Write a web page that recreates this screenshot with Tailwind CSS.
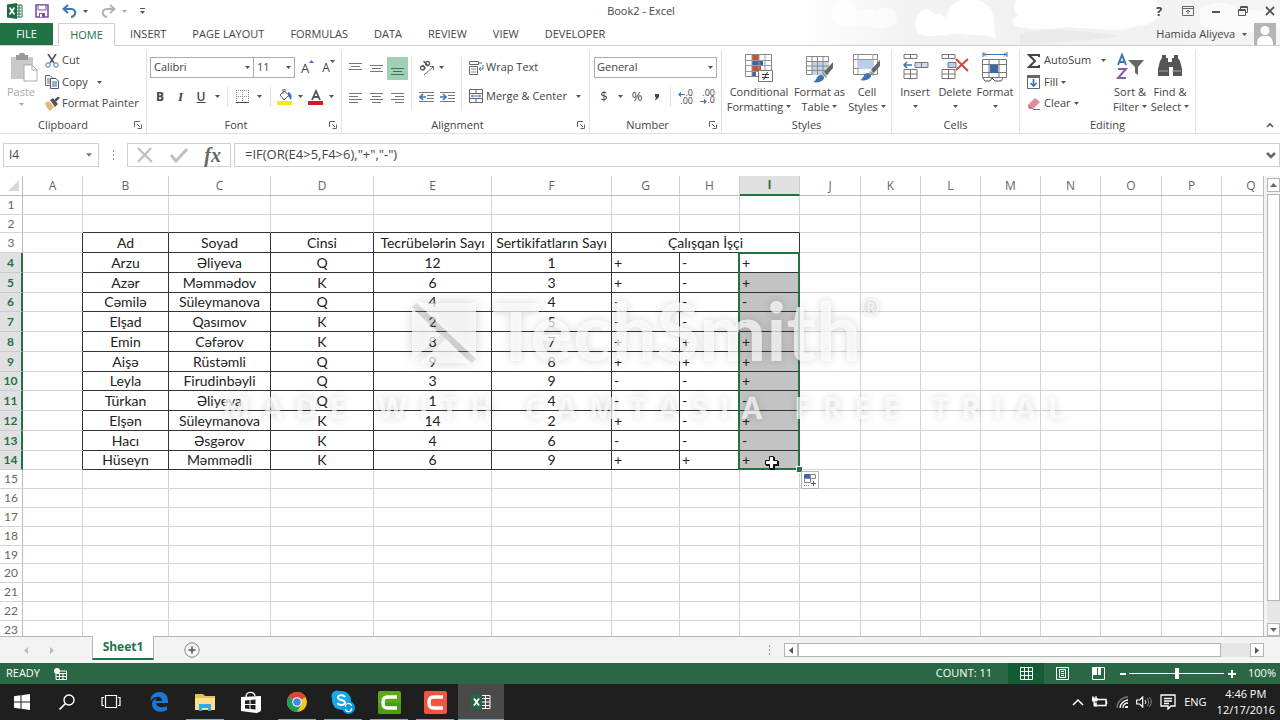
<!DOCTYPE html>
<html lang="en">
<head>
  <meta charset="UTF-8">
  <meta name="viewport" content="width=device-width, initial-scale=1.0">
  <script src="https://cdn.jsdelivr.net/npm/@tailwindcss/browser@4"></script>
  <title>Book2 - Excel</title>
</head>
<body class="h-screen flex flex-col overflow-hidden bg-white text-[#444] text-[11px] font-['Open_Sans','Noto_Sans',sans-serif]">

  <!-- shared icons -->
  <svg class="hidden">
    <symbol id="caret" viewBox="0 0 5 3"><path d="M0 0h5L2.5 3z" fill="#555"/></symbol>
    <symbol id="launcher" viewBox="0 0 8 8"><path d="M.5 6V.5H6M3 3l3 3M7.500 3.500v4h-4" fill="none" stroke="#666"/></symbol>
    <symbol id="brush" viewBox="0 0 22 22"><path d="M21 1v6l-6 7-3-3z" fill="#666"/><path d="M12 12l3 3-1 2-4-4z" fill="#999"/><path d="M1 21c4-1 3-7 8-7 3 0 4 3 2 5-2 2-6 3-10 2z" fill="#3c74b5"/></symbol>
    <symbol id="excel" viewBox="0 0 16 16"><path d="M8 2h7v12H8z" fill="#fff" stroke="#1e7145"/><path d="M9 5h5M9 8h5M9 11h5M12 2v12" stroke="#1e7145"/><path d="M0 1.500L10 0v16L0 14.500z" fill="#1e6b41"/><path d="M2.500 4.500l5 7M7.500 4.500l-5 7" stroke="#fff" stroke-width="1.600"/></symbol>
  </svg>

  <!-- title bar and tabs -->
  <header class="relative">
    <svg class="absolute right-0 top-0 w-[480px] h-[45px] opacity-80" viewBox="0 0 480 45" preserveAspectRatio="none">
      <defs>
        <linearGradient id="sky" x1="0" x2="1"><stop offset="0" stop-color="#fff"/><stop offset=".2" stop-color="#f1f1f1"/><stop offset=".5" stop-color="#eee"/><stop offset="1" stop-color="#f3f3f3"/></linearGradient>
      </defs>
      <path d="M0 0h480v45H0z" fill="url(#sky)"/>
      <g fill="#fff">
        <path d="M34 22c-6-10 0-22 12-22 8 0 10 8 12 12 6-5 14-4 18 0 6-6 18-6 20 2 4 12-10 16-20 14-12-2-34 2-42-6z" opacity=".7"/>
        <path d="M116 20c0-10 12-14 18-6 6-2 10 2 12 4C148 4 162-4 174 0c16 0 22 16 20 26l2 12c-12-4-24-2-34-4-14-2-40 8-46-4 0-4-2-6 0-10z"/>
        <path d="M216 0h140c12 10 2 26-20 26-14 8-40 2-60 2-20-2-30 4-50 0-14 0-18-8-8-12-4-4-6-10-2-16z" opacity=".9"/>
        <path d="M400 8c14-8 30-6 38 2 14-2 26 4 42 0v18c-30 8-70 4-80-4z" opacity=".7"/>
      </g>
      <path d="M220 34c30-8 70-2 100 2-30 6-80 6-100 9z" fill="#e6e6e6"/>
    </svg>
    <div class="relative flex items-center h-[22px]">
      <div class="flex-1 flex items-center pl-[7px]">
        <svg class="w-4 h-4" aria-label="Excel"><use href="#excel"/></svg>
        <button class="ml-3" aria-label="Save">
          <svg class="w-[14px] h-[14px]" viewBox="0 0 14 14"><path d="M1 1h12v12H1z" fill="none" stroke="#7a4fa3" stroke-width="1.600"/><path d="M3 1h8v5H3z" fill="#fff" stroke="#7a4fa3"/><path d="M4 9h6v4H4z" fill="#7a4fa3"/><path d="M5 10h2v3H5z" fill="#fff"/></svg>
        </button>
        <button class="ml-[13px] flex items-center gap-[6px]" aria-label="Undo">
          <svg class="w-[15px] h-[14px]" viewBox="0 0 15 14"><path d="M2 5h7c3 0 5 2 4 5-1 2-2 3-4 3" fill="none" stroke="#3c74b5" stroke-width="2"/><path d="M6 1L1.500 5 6 9" fill="none" stroke="#3c74b5" stroke-width="2"/></svg>
          <svg class="w-[5px] h-[3px]"><use href="#caret"/></svg>
        </button>
        <button class="ml-[13px] flex items-center gap-[6px] opacity-50" aria-label="Redo">
          <svg class="w-[15px] h-[14px]" viewBox="0 0 15 14"><path d="M13 5H6C3 5 1 7 2 10c1 2 2 3 4 3" fill="none" stroke="#666" stroke-width="2"/><path d="M9 1l4.500 4L9 9" fill="none" stroke="#666" stroke-width="2"/></svg>
          <svg class="w-[5px] h-[3px]"><use href="#caret"/></svg>
        </button>
        <button class="ml-[13px]" aria-label="Customize toolbar">
          <svg class="w-[5px] h-[6px]" viewBox="0 0 5 6"><path d="M0 .5h5" stroke="#555"/><path d="M0 3h5L2.500 6z" fill="#555"/></svg>
        </button>
      </div>
      <h1>Book2 - Excel</h1>
      <div class="flex-1 flex items-center justify-end gap-[17px] pr-[5px]">
        <button class="text-[13px] font-bold w-3 leading-none" aria-label="Help">?</button>
        <button aria-label="Ribbon options"><svg class="w-3 h-[10px]" viewBox="0 0 12 10"><path d="M.5.500h11v9H.5zM.5 2.500h11M6 8V4M4 6l2-2 2 2" fill="none" stroke="#666"/></svg></button>
        <button aria-label="Minimize"><svg class="w-[10px] h-[10px]" viewBox="0 0 10 10"><path d="M1 6h8" stroke="#555" stroke-width="2"/></svg></button>
        <button aria-label="Restore"><svg class="w-[10px] h-[10px]" viewBox="0 0 10 10"><path d="M.5 3.500h7v6h-7zM.5 4.500h7M2.500 3V.5h7v6H8M2.500 1.500h7" fill="none" stroke="#555"/></svg></button>
        <button aria-label="Close"><svg class="w-[10px] h-[10px]" viewBox="0 0 10 10"><path d="M1 1l8 8M9 1L1 9" stroke="#555" stroke-width="1.800"/></svg></button>
      </div>
    </div>
    <nav class="relative flex items-stretch h-6 pt-px border-b border-[#d0d0d0]">
      <button class="w-[53px] bg-[#217346] text-white">FILE</button>
      <button class="w-[57px] ml-[5px] -mb-px bg-white border border-b-0 border-[#d0d0d0] text-[#217346]">HOME</button>
      <button class="px-[13px] ml-[2px]">INSERT</button>
      <button class="px-[13px]">PAGE LAYOUT</button>
      <button class="px-[13px]">FORMULAS</button>
      <button class="px-[13px]">DATA</button>
      <button class="px-[13px]">REVIEW</button>
      <button class="px-[13px]">VIEW</button>
      <button class="px-[13px]">DEVELOPER</button>
      <button class="ml-auto flex items-center gap-[7px] pr-1">
        Hamida Aliyeva
        <svg class="w-[5px] h-[3px]"><use href="#caret"/></svg>
        <svg class="w-[22px] h-[22px]" viewBox="0 0 22 22"><path d="M0 0h22v22H0z" fill="#b5b5b5"/><circle cx="11" cy="7.500" r="4.500" fill="#fff"/><path d="M3 22c0-8 3-9 8-9s8 1 8 9z" fill="#fff"/></svg>
      </button>
    </nav>
  </header>

  <!-- ribbon -->
  <section class="flex h-[88px] pt-1 border-b border-[#e2e2e2] whitespace-nowrap">
    <div class="w-[147px] flex flex-col border-r border-[#e2e2e2]">
      <div class="flex h-[68px]">
        <button class="w-[42px] flex flex-col items-center text-[#aaa] leading-[15px] pt-[2px]">
          <svg class="w-7 h-8 ml-[5px]" viewBox="0 0 28 32"><path d="M1 5h22v22H1z" fill="#c9c9c9"/><path d="M6 3h3c0-3 6-3 6 0h3v5H6z" fill="#999"/><path d="M14 13h8l5 5v11H14z" fill="#fff" stroke="#aaa"/><path d="M22 13v5h5" fill="none" stroke="#aaa"/></svg>
          Paste
          <svg class="w-[5px] h-[3px] mt-1 opacity-50"><use href="#caret"/></svg>
        </button>
        <div class="flex flex-col items-start pl-[3px]">
          <button class="h-[21px] flex items-center gap-[3px]">
            <svg class="w-[14px] h-[14px]" viewBox="0 0 14 14"><path d="M3 0l6 9M11 0L5 9" stroke="#555" stroke-width="1.600"/><circle cx="3" cy="11" r="2.200" fill="none" stroke="#3c74b5"/><circle cx="11" cy="11" r="2.200" fill="none" stroke="#3c74b5"/></svg>
            Cut
          </button>
          <button class="h-[22px] flex items-center gap-[3px]">
            <svg class="w-[14px] h-[14px]" viewBox="0 0 14 14"><path d="M.5.500H5L7.500 3v7.500h-7zM2 4h3M2 6h3M2 8h3" fill="#fff" stroke="#666"/><path d="M5.500 3.500H11L13.500 6v7.500h-8z" fill="#fff" stroke="#3d5f85"/><path d="M7 7h5M7 9h5M7 11h5" stroke="#3d5f85"/></svg>
            Copy
            <svg class="w-[5px] h-[3px] ml-[6px]"><use href="#caret"/></svg>
          </button>
          <button class="h-[21px] flex items-center gap-[2px]">
            <svg class="w-[15px] h-[14px]" viewBox="0 0 15 14"><path d="M0 6l4-2 5 6-4 4c-3-2-4-5-5-8z" fill="#eab676"/><path d="M5 3l3-2 5 6-3 3z" fill="#555"/><path d="M10 4l4-4" stroke="#555" stroke-width="2.500"/></svg>
            Format Painter
          </button>
        </div>
      </div>
      <div class="flex items-center h-[14px] pr-1"><span class="flex-1 text-center pr-2">Clipboard</span><svg class="w-2 h-2"><use href="#launcher"/></svg></div>
    </div>

    <div class="w-[195px] flex flex-col border-r border-[#e2e2e2]">
      <div class="h-[68px] pt-[7px] pl-[3px] flex flex-col gap-2">
        <div class="flex h-[21px] items-center">
          <label class="relative w-[104px] h-[21px]"><select class="appearance-none w-full h-full border border-[#ababab] pl-[3px]" aria-label="Font"><option>Calibri</option></select><svg class="absolute right-1 top-[9px] w-[5px] h-[3px]"><use href="#caret"/></svg></label>
          <label class="relative w-[42px] -ml-px h-[21px]"><select class="appearance-none w-full h-full border border-[#ababab] pl-[3px]" aria-label="Font size"><option>11</option></select><svg class="absolute right-1 top-[9px] w-[5px] h-[3px]"><use href="#caret"/></svg></label>
          <button class="flex pl-[6px] text-[13px] leading-4" aria-label="Increase font size">A<svg class="w-[5px] h-[3px]" viewBox="0 0 5 3"><path d="M0 3h5L2.500 0z" fill="#3c74b5"/></svg></button>
          <button class="flex pl-2 text-[12px] leading-4" aria-label="Decrease font size">A<svg class="w-[5px] h-[3px]" viewBox="0 0 5 3"><path d="M0 0h5L2.500 3z" fill="#3d5f85"/></svg></button>
        </div>
        <div class="flex h-[21px] items-center text-[12px]">
          <button class="w-5 font-bold">B</button>
          <button class="w-[21px] italic font-['Liberation_Serif',serif] font-bold text-[13px]">I</button>
          <button class="w-5 underline font-semibold">U</button>
          <button class="w-3 flex justify-center" aria-label="Underline options"><svg class="w-[5px] h-[3px]"><use href="#caret"/></svg></button>
          <span class="w-px h-5 bg-[#e2e2e2] ml-1"></span>
          <button class="ml-2 flex items-center gap-2" aria-label="Borders"><svg class="w-[13px] h-[13px]" viewBox="0 0 13 13"><path d="M.5 0v12M12.500 0v12M6.500 0v12M0 .5h13M0 6.500h13" stroke="#888" stroke-dasharray="1 1"/><path d="M0 12.500h13" stroke="#444"/></svg><svg class="w-[5px] h-[3px]"><use href="#caret"/></svg></button>
          <span class="w-px h-5 bg-[#e2e2e2] ml-2"></span>
          <button class="ml-[6px] flex items-center gap-[5px]" aria-label="Fill color"><svg class="w-4 h-4" viewBox="0 0 16 16"><path d="M3 6l4-4 5 4-5 5z" fill="#fff" stroke="#666"/><path d="M6 5V0h2v3" fill="none" stroke="#666"/><path d="M11 3c4 1 4 5 3 8l-3-4z" fill="#3c74b5"/><path d="M0 12h15v4H0z" fill="#f7e81c"/></svg><svg class="w-[5px] h-[3px]"><use href="#caret"/></svg></button>
          <button class="ml-[5px] flex items-center gap-[5px]" aria-label="Font color"><svg class="w-4 h-4" viewBox="0 0 16 16"><path d="M4 11l4-9 4 9M5.500 8h5" fill="none" stroke="#555" stroke-width="1.800"/><path d="M0 12h15v4H0z" fill="#e0161c"/></svg><svg class="w-[5px] h-[3px]"><use href="#caret"/></svg></button>
        </div>
      </div>
      <div class="flex items-center h-[14px] pr-1"><span class="flex-1 text-center pr-1">Font</span><svg class="w-2 h-2"><use href="#launcher"/></svg></div>
    </div>

    <div class="w-[248px] flex flex-col border-r border-[#e2e2e2]">
      <div class="h-[68px] pt-[7px] pl-[3px] flex">
        <div class="grid grid-cols-3 gap-y-2 w-[63px] h-[50px]">
          <button class="flex items-center justify-center" aria-label="Top align"><svg class="w-[13px] h-[15px]" viewBox="0 0 13 15"><path d="M0 2.500h13M2 5.500h9M0 8.500h13" stroke="#777"/></svg></button>
          <button class="flex items-center justify-center" aria-label="Middle align"><svg class="w-[13px] h-[15px]" viewBox="0 0 13 15"><path d="M0 4.500h13M2 7.500h9M0 10.500h13" stroke="#777"/></svg></button>
          <button class="flex items-center justify-center bg-[#9fd0b6]" aria-label="Bottom align"><svg class="w-[13px] h-[15px]" viewBox="0 0 13 15"><path d="M0 7.500h13M2 10.500h9M0 13.500h13" stroke="#4d6b5a"/></svg></button>
          <button class="flex items-center justify-center" aria-label="Align left"><svg class="w-[13px] h-[11px]" viewBox="0 0 13 11"><path d="M0 1.500h13M0 4.500h9M0 7.500h13M0 10.500h9" stroke="#777"/></svg></button>
          <button class="flex items-center justify-center" aria-label="Center"><svg class="w-[13px] h-[11px]" viewBox="0 0 13 11"><path d="M0 1.500h13M2 4.500h9M0 7.500h13M2 10.500h9" stroke="#777"/></svg></button>
          <button class="flex items-center justify-center" aria-label="Align right"><svg class="w-[13px] h-[11px]" viewBox="0 0 13 11"><path d="M0 1.500h13M4 4.500h9M0 7.500h13M4 10.500h9" stroke="#777"/></svg></button>
        </div>
        <span class="w-px h-[52px] bg-[#e2e2e2] ml-[3px]"></span>
        <div class="flex flex-col gap-2 w-[49px] pl-[7px]">
          <button class="h-[21px] flex items-center gap-1" aria-label="Orientation"><svg class="w-4 h-4 overflow-visible" viewBox="0 0 16 16"><g fill="none" stroke="#555" stroke-width="1.300"><circle cx="3.500" cy="8" r="2"/><path d="M3.500 5l3 3.500M4.500 1l4.500 5"/><circle cx="8.500" cy="3.500" r="2"/></g><path d="M5 15l9-8M11 6.500h3.500V10" fill="none" stroke="#666"/></svg><svg class="w-[5px] h-[3px]"><use href="#caret"/></svg></button>
          <div class="h-[21px] flex items-center gap-[6px]">
            <button aria-label="Decrease indent"><svg class="w-[15px] h-[11px]" viewBox="0 0 15 11"><path d="M0 1.500h15M8 4.500h7M8 7.500h7M0 10.500h15" stroke="#777"/><path d="M1 6h6M4 3L1 6l3 3" fill="none" stroke="#3c74b5" stroke-width="1.600"/></svg></button>
            <button aria-label="Increase indent"><svg class="w-[15px] h-[11px]" viewBox="0 0 15 11"><path d="M0 1.500h15M8 4.500h7M8 7.500h7M0 10.500h15" stroke="#777"/><path d="M0 6h6M3 3l3 3-3 3" fill="none" stroke="#3c74b5" stroke-width="1.600"/></svg></button>
          </div>
        </div>
        <span class="w-px h-[52px] bg-[#e2e2e2]"></span>
        <div class="flex flex-col items-start gap-2 pl-[7px]">
          <button class="h-[21px] flex items-center gap-[2px]"><svg class="w-[15px] h-[15px]" viewBox="0 0 15 15"><path d="M.5 1.500h9v3h-9zM.5 6.500h8v8h-8z" fill="#fff" stroke="#666"/><path d="M2 9h5M2 12h5" stroke="#888"/><path d="M9 3h4M14 5v4h-4M12 7l-2 2 2 2" fill="none" stroke="#3c74b5"/></svg>Wrap Text</button>
          <button class="h-[21px] flex items-center gap-[2px]"><svg class="w-[15px] h-[15px]" viewBox="0 0 15 15"><path d="M.5.500h13v13H.5zM.5 4.500h13M.5 9.500h13M7 .5v4M7 9.500v4" fill="none" stroke="#666"/><path d="M2 7h10M4 5.500L2.500 7 4 8.500M10 5.500L11.500 7 10 8.500" fill="none" stroke="#3c74b5"/></svg>Merge &amp; Center<svg class="w-[5px] h-[3px] ml-[7px]"><use href="#caret"/></svg></button>
        </div>
      </div>
      <div class="flex items-center h-[14px] pr-1"><span class="flex-1 text-center pr-1">Alignment</span><svg class="w-2 h-2"><use href="#launcher"/></svg></div>
    </div>

    <div class="w-[132px] flex flex-col border-r border-[#e2e2e2]">
      <div class="h-[68px] pt-[7px] pl-1 flex flex-col gap-2">
        <label class="relative w-[123px] h-[21px]"><select class="appearance-none w-full h-full border border-[#ababab] pl-[2px]" aria-label="Number format"><option>General</option></select><svg class="absolute right-1 top-[9px] w-[5px] h-[3px]"><use href="#caret"/></svg></label>
        <div class="flex h-[21px] items-center text-[13px]">
          <button class="w-5">$</button>
          <button class="w-3 flex justify-center" aria-label="Currency options"><svg class="w-[5px] h-[3px]"><use href="#caret"/></svg></button>
          <button class="w-[22px]">%</button>
          <button class="w-[18px] flex justify-center" aria-label="Comma style"><svg class="w-1 h-[6px]" viewBox="0 0 4 6"><path d="M0 0h4v3L1 6H0l1-3H0z" fill="#444"/></svg></button>
          <span class="w-px h-5 bg-[#e2e2e2] ml-1"></span>
          <button class="ml-1 w-[18px] text-[9px] leading-[7px] text-right" aria-label="Increase decimal"><svg class="inline w-[7px] h-[5px] align-middle" viewBox="0 0 7 5"><path d="M7 2.500H1M3 .5l-2 2 2 2" fill="none" stroke="#3c74b5" stroke-width="1.200"/></svg>.0<br>.00</button>
          <button class="ml-1 w-[18px] text-[9px] leading-[7px] text-right" aria-label="Decrease decimal">.00<br><svg class="inline w-[7px] h-[5px] align-middle" viewBox="0 0 7 5"><path d="M0 2.500h6M4 .5l2 2-2 2" fill="none" stroke="#3c74b5" stroke-width="1.200"/></svg>.0</button>
        </div>
      </div>
      <div class="flex items-center h-[14px] pr-1"><span class="flex-1 text-center pr-1">Number</span><svg class="w-2 h-2"><use href="#launcher"/></svg></div>
    </div>

    <div class="w-[170px] flex flex-col border-r border-[#e2e2e2]">
      <div class="h-[68px] pl-1 flex leading-[15px]">
        <button class="w-[66px] pt-[2px] flex flex-col items-center">
          <svg class="w-7 h-8" viewBox="0 0 28 32"><path d="M.5 2.500h26v22H.5z" fill="#fff" stroke="#888"/><path d="M7 3h7v5H7zM7 14h9v5H7z" fill="#c8503c"/><path d="M7 8h11v6H7zM7 19h4v5H7z" fill="#3c66a5"/><path d="M7 2v22M14 2v22M20 2v22M0 8.500h26M0 13.500h26M0 19.500h26" stroke="#999"/><path d="M13.500 18.500h14v11h-14z" fill="#fff" stroke="#777"/><path d="M17 22.500h7M17 25.500h7M22.500 20l-4 8" stroke="#333"/></svg>
          <span>Conditional</span>
          <span class="flex items-center gap-[3px]">Formatting<svg class="w-[5px] h-[3px]"><use href="#caret"/></svg></span>
        </button>
        <button class="w-[55px] pt-[2px] flex flex-col items-center">
          <svg class="w-7 h-8" viewBox="0 0 28 32"><path d="M.5 4.500h22v18H.5z" fill="#fff" stroke="#888"/><path d="M6 10h17v13H6z" fill="#c3d3ea"/><path d="M6 4v19M11.500 4v19M17 4v19M0 9.500h23M0 14h23M0 18.500h23" stroke="#888"/><use href="#brush" x="6" y="9" width="22" height="22"/></svg>
          <span>Format as</span>
          <span class="flex items-center gap-[3px]">Table<svg class="w-[5px] h-[3px]"><use href="#caret"/></svg></span>
        </button>
        <button class="w-[40px] pt-[2px] flex flex-col items-center">
          <svg class="w-7 h-8" viewBox="0 0 28 32"><path d="M.5 2.500h24v20H.5z" fill="#fff" stroke="#888"/><path d="M5 2v20M0 7.500h25M0 16.500h25M20 2v20" stroke="#999"/><path d="M6 8h13v9H6z" fill="#b9cfec"/><use href="#brush" x="6" y="7" width="22" height="22"/></svg>
          <span>Cell</span>
          <span class="flex items-center gap-[3px]">Styles<svg class="w-[5px] h-[3px]"><use href="#caret"/></svg></span>
        </button>
      </div>
      <div class="h-[14px] flex items-center justify-center">Styles</div>
    </div>

    <div class="w-[128px] flex flex-col border-r border-[#e2e2e2]">
      <div class="h-[68px] pl-[3px] flex leading-[15px]">
        <button class="w-10 pt-[2px] flex flex-col items-center">
          <svg class="w-7 h-8" viewBox="0 0 28 32"><path d="M3 2.500h13v4H3zM3 17.500h13v9H3zM9.500 2v5M9.500 17v10M3 22h13" fill="#fff" stroke="#777"/><path d="M14 10.500h13v5H14zM20.500 10v6" fill="#cfd8e6" stroke="#777"/><path d="M3 13h8M6 10l-3 3 3 3" fill="none" stroke="#3c74b5" stroke-width="1.500"/></svg>
          Insert
          <svg class="w-[5px] h-[3px] mt-[6px]"><use href="#caret"/></svg>
        </button>
        <button class="w-10 pt-[2px] flex flex-col items-center">
          <svg class="w-7 h-8" viewBox="0 0 28 32"><path d="M1 2.500h13v4H1zM1 17.500h13v9H1zM7.500 2v5M7.500 17v10M1 22h13" fill="#fff" stroke="#777"/><path d="M7 10.500h8v5H7z" fill="#b9cfec" stroke="#777"/><path d="M15 7l12 12M27 7L15 18" stroke="#d0483c" stroke-width="2"/></svg>
          Delete
          <svg class="w-[5px] h-[3px] mt-[6px]"><use href="#caret"/></svg>
        </button>
        <button class="w-10 pt-[2px] flex flex-col items-center">
          <svg class="w-7 h-8" viewBox="0 0 28 32"><path d="M2 2.500h24M2 0v5M26 0v5M5 .5L3 2.500l2 2M23 .5l2 2-2 2" fill="none" stroke="#3c74b5"/><path d="M1.500 7.500h24v18h-24zM8 7v18M18 7v18M1 12.500h24M1 20.500h24" fill="#fff" stroke="#777"/><path d="M9 13h8v8H9z" fill="#3c66a5"/><path d="M2 26l2 3h5l2-3 3 3h6l2-3" fill="none" stroke="#555"/></svg>
          Format
          <svg class="w-[5px] h-[3px] mt-[6px]"><use href="#caret"/></svg>
        </button>
      </div>
      <div class="h-[14px] flex items-center justify-center">Cells</div>
    </div>

    <div class="w-[176px] flex flex-col border-r border-[#e2e2e2]">
      <div class="h-[68px] pl-[7px] flex">
        <div class="w-[83px] flex flex-col items-start">
          <button class="h-[21px] w-full flex items-center gap-[3px]"><svg class="w-[14px] h-[14px]" viewBox="0 0 14 14"><path d="M12 3V1H2l6 6-6 6h10v-2" fill="none" stroke="#444" stroke-width="2"/></svg>AutoSum<svg class="w-[5px] h-[3px] ml-[7px]"><use href="#caret"/></svg></button>
          <button class="h-[22px] flex items-center gap-[3px]"><svg class="w-[14px] h-[14px]" viewBox="0 0 14 14"><path d="M.5.500h12v13H.5z" fill="#fff" stroke="#666"/><path d="M0 0h13v3H0z" fill="#666"/><path d="M6.500 4v7M3.500 8l3 3 3-3" fill="none" stroke="#3c74b5" stroke-width="1.700"/></svg>Fill<svg class="w-[5px] h-[3px]"><use href="#caret"/></svg></button>
          <button class="h-[21px] flex items-center gap-[3px]"><svg class="w-[14px] h-[14px]" viewBox="0 0 14 14"><path d="M1 8l7-7 5 4-7 7H3z" fill="#e58a9c"/><path d="M1 8l5 4H3L1 10z" fill="#c96a80"/><path d="M6 12.500h7" stroke="#777"/></svg>Clear<svg class="w-[5px] h-[3px]"><use href="#caret"/></svg></button>
        </div>
        <button class="w-10 pt-[2px] flex flex-col items-center leading-[15px]">
          <svg class="w-7 h-8" viewBox="0 0 28 32"><path d="M2 13L6 3l4 10M3.500 10h5" fill="none" stroke="#3c74b5" stroke-width="2"/><path d="M2 17h8l-8 9h8" fill="none" stroke="#8b5aae" stroke-width="2"/><path d="M12 8h16l-6 7v8l-3-2v-6z" fill="#666"/></svg>
          <span>Sort &amp;</span>
          <span class="flex items-center gap-[3px]">Filter<svg class="w-[5px] h-[3px]"><use href="#caret"/></svg></span>
        </button>
        <button class="w-10 pt-[2px] flex flex-col items-center leading-[15px]">
          <svg class="w-7 h-8" viewBox="0 0 28 32"><path d="M6 3h4v3h2v4h4V6h2V3h4v3l2 3 2 8v7h-9v-9h-4v9H2v-7l2-8 2-3z" fill="#555"/><path d="M3 19h9M16 19h9" stroke="#aaa"/></svg>
          <span>Find &amp;</span>
          <span class="flex items-center gap-[3px]">Select<svg class="w-[5px] h-[3px]"><use href="#caret"/></svg></span>
        </button>
      </div>
      <div class="h-[14px] flex items-center justify-center">Editing</div>
    </div>
    <button class="ml-auto self-end pr-[6px] pb-[5px]" aria-label="Collapse ribbon"><svg class="w-2 h-[6px]" viewBox="0 0 8 6"><path d="M1 5l3-3 3 3" fill="none" stroke="#555" stroke-width="1.600"/></svg></button>
  </section>

  <!-- formula bar -->
  <div class="flex h-[42px] py-[9px] pl-[3px]">
    <div class="w-[96px] flex items-center border border-[#d0d0d0] pr-[6px]">
      <input class="min-w-0 flex-1 pl-[5px] text-[12px]" value="I4" aria-label="Name box">
      <button aria-label="Cell names"><svg class="w-[6px] h-1" viewBox="0 0 5 3"><path d="M0 0h5L2.500 3z" fill="#777"/></svg></button>
    </div>
    <svg class="w-7 h-6" viewBox="0 0 28 24"><path d="M14.500 7v11" stroke="#999" stroke-dasharray="2 2"/></svg>
    <div class="w-[104px] flex items-center justify-between border border-[#d0d0d0] px-[9px]">
      <button aria-label="Cancel"><svg class="w-4 h-4" viewBox="0 0 16 16"><path d="M1 1l14 14M14 1L1 15" stroke="#c0c0c0" stroke-width="2.200"/></svg></button>
      <button aria-label="Enter"><svg class="w-[18px] h-4" viewBox="0 0 18 16"><path d="M1 8l5 6L17 2" fill="none" stroke="#c0c0c0" stroke-width="3"/></svg></button>
      <button class="font-['Liberation_Serif',serif] italic font-bold text-[20px] leading-none text-[#666]" aria-label="Insert function">fx</button>
    </div>
    <div class="flex-1 ml-[3px] flex items-center border border-[#d0d0d0] pr-[3px]">
      <input class="flex-1 pl-[10px] text-[13px]" value='=IF(OR(E4&gt;5,F4&gt;6),"+","-")' aria-label="Formula">
      <button aria-label="Expand formula bar"><svg class="w-[10px] h-2" viewBox="0 0 10 8"><path d="M1 2l4 4 4-4" fill="none" stroke="#666" stroke-width="2.500"/></svg></button>
    </div>
  </div>

  <!-- sheet -->
  <main class="flex-1 min-h-0 flex bg-[#f3f3f3]">
    <div class="relative flex-1 overflow-hidden bg-white border-r border-[#bbb]">
      <table class="table-fixed w-[calc(100%+18px)] border-separate border-spacing-0">
        <colgroup>
          <col class="w-[23px]"><col class="w-[60px]"><col class="w-[86px]"><col class="w-[102px]"><col class="w-[103px]"><col class="w-[118px]"><col class="w-[120px]"><col class="w-[68px]"><col class="w-[60px]"><col class="w-[60px]"><col class="w-[61px]"><col class="w-[60px]"><col class="w-[60px]"><col class="w-[60px]"><col class="w-[60px]"><col class="w-[61px]"><col class="w-[60px]"><col>
        </colgroup>
        <thead><tr id="letters"></tr></thead>
        <tbody id="cells" class="font-['Lato',sans-serif] text-[14px] text-[#222] [font-variant-ligatures:none]"></tbody>
      </table>
      <div class="absolute left-[738px] top-[76px] w-[62px] h-[218px] border-2 border-[#217346] pointer-events-none"></div>
      <div class="absolute left-[796px] top-[290px] w-[5px] h-[5px] bg-[#217346] border border-white box-content"></div>
      <button class="absolute left-[801px] top-[295px] w-[18px] h-[18px] border border-[#b5b5b5] bg-white flex items-center justify-center" aria-label="Auto fill options">
        <svg class="w-[14px] h-[14px]" viewBox="0 0 14 14"><path d="M1.500 1.500h6v4h-6z" fill="#3c66c5" stroke="#567"/><path d="M7.500 1.500h5v4h-5zM1.500 5.500h6v4h-6z" fill="#fff" stroke="#888"/><path d="M1 12.500h6" stroke="#888" stroke-dasharray="1 1"/><path d="M8 10.500h5M10.500 8v5" stroke="#555"/></svg>
      </button>

      <!-- watermark -->
      <div class="absolute left-[412px] top-[106px] flex pointer-events-none text-white/70">
        <svg class="w-[64px] h-[60px] mt-[21px] mr-4 overflow-visible drop-shadow-[0_0_6px_rgba(0,0,0,0.25)]" viewBox="0 0 64 60"><path d="M6 0h58v56L38 32zM0 5l28 27L0 57zM34 36l24 24H8z" fill="#fff" fill-opacity=".7"/><path d="M2 2l60 56" stroke="#888" stroke-opacity=".22" stroke-width="6"/></svg>
        <span class="font-['Lato',sans-serif] font-bold text-[80px] leading-[96px] [text-shadow:0_0_10px_rgba(0,0,0,0.16)]">TechSmith</span>
        <span class="text-[22px] pt-2 [text-shadow:0_0_5px_rgba(0,0,0,0.3)]">®</span>
      </div>
      <div class="absolute left-[222px] top-[212px] whitespace-nowrap pointer-events-none text-white/70 font-bold text-[30px] leading-[40px] tracking-[12px] [text-shadow:0_0_8px_rgba(0,0,0,0.16)]">MADE WITH CAMTASIA FREE TRIAL</div>

      <svg class="absolute left-[764px] top-[279px] w-4 h-4 pointer-events-none" viewBox="0 0 16 16"><path d="M6 2h5v4h4v5h-4v4H6v-4H2V6h4z" fill="#111"/><path d="M5.500 1.500h4v4h4v4h-4v4h-4v-4h-4v-4h4z" fill="#fff" stroke="#111"/></svg>
    </div>
    <div class="w-4 pl-[3px] flex flex-col">
      <button class="h-[14px] mt-[2px] mb-[2px] bg-white border border-[#b5b5b5] flex items-center justify-center" aria-label="Scroll up"><svg class="w-[7px] h-1" viewBox="0 0 7 4"><path d="M0 4h7L3.500 0z" fill="#666"/></svg></button>
      <div class="flex-1 bg-[#e6e6e6] mb-px"><div class="h-[95%] bg-white border border-[#b5b5b5]"></div></div>
      <button class="h-[13px] bg-white border border-[#b5b5b5] flex items-center justify-center" aria-label="Scroll down"><svg class="w-[7px] h-1" viewBox="0 0 7 4"><path d="M0 0h7L3.500 4z" fill="#666"/></svg></button>
    </div>
  </main>

  <!-- sheet tabs -->
  <div class="flex h-[27px] bg-[#f3f3f3] border-t border-[#b5b5b5]">
    <div class="w-[92px] flex items-center gap-[22px] pl-6">
      <button aria-label="Previous sheet"><svg class="w-1 h-[7px]" viewBox="0 0 4 7"><path d="M4 0v7L0 3.500z" fill="#bbb"/></svg></button>
      <button aria-label="Next sheet"><svg class="w-1 h-[7px]" viewBox="0 0 4 7"><path d="M0 0v7l4-3.500z" fill="#bbb"/></svg></button>
    </div>
    <button class="w-[62px] h-6 -mt-px bg-white border-x border-x-[#b5b5b5] border-b-2 border-b-[#217346] text-[#217346] text-[12px] font-bold">Sheet1</button>
    <button class="ml-[30px]" aria-label="New sheet"><svg class="w-4 h-4" viewBox="0 0 16 16"><circle cx="8" cy="8" r="7.200" fill="none" stroke="#888"/><path d="M4.500 8h7M8 4.500v7" stroke="#555" stroke-width="1.600"/></svg></button>
    <svg class="ml-auto w-2 h-[26px] mr-2" viewBox="0 0 8 26"><path d="M1.500 8v11" stroke="#999" stroke-dasharray="2 2"/></svg>
    <div class="w-[480px] h-[14px] mt-[6px] mr-4 flex bg-[#e6e6e6]">
      <button class="w-[14px] bg-white border border-[#b5b5b5] flex items-center justify-center" aria-label="Scroll left"><svg class="w-1 h-[7px]" viewBox="0 0 4 7"><path d="M4 0v7L0 3.500z" fill="#555"/></svg></button>
      <div class="flex-1 mr-[29px] bg-white border border-[#b5b5b5]"></div>
      <button class="w-[14px] bg-white border border-[#b5b5b5] flex items-center justify-center" aria-label="Scroll right"><svg class="w-1 h-[7px]" viewBox="0 0 4 7"><path d="M0 0v7l4-3.500z" fill="#555"/></svg></button>
    </div>
  </div>

  <!-- status bar -->
  <footer class="flex items-center h-[21px] bg-[#2a6845] text-white text-[11px] pl-[6px] pr-1">
    <span>READY</span>
    <button class="ml-[14px]" aria-label="Record macro"><svg class="w-[13px] h-3" viewBox="0 0 13 12"><path d="M2 3h10.500v8.500H2z" fill="none" stroke="#fff"/><path d="M2 5.500h10M2 8.500h10M5.500 5v6M9 5v6" stroke="#fff"/><circle cx="3" cy="3" r="3" fill="#fff"/></svg></button>
    <span class="ml-auto">COUNT: 11</span>
    <button class="ml-4 w-9 h-[21px] bg-[#125c35] flex items-center justify-center" aria-label="Normal view"><svg class="w-[13px] h-[13px]" viewBox="0 0 13 13"><path d="M.5.500h12v12H.5zM4.500 0v13M8.500 0v13M0 4.500h13M0 8.500h13" fill="none" stroke="#fff"/></svg></button>
    <button class="w-9 flex justify-center" aria-label="Page layout view"><svg class="w-[13px] h-[13px]" viewBox="0 0 13 13"><path d="M.5.500h12v12H.5zM3.500 2.500h6v8h-6zM5 4.500h3M5 6.500h3M5 8.500h3" fill="none" stroke="#fff"/></svg></button>
    <button class="w-9 flex justify-center" aria-label="Page break view"><svg class="w-[13px] h-[13px]" viewBox="0 0 13 13"><path d="M.5.500h12v12H.5z" fill="none" stroke="#fff"/><path d="M1 1h4v7H1zM6 1h3v7H6z" fill="#fff"/></svg></button>
    <button class="ml-1 w-[9px]" aria-label="Zoom out"><svg class="w-[7px] h-2" viewBox="0 0 7 8"><path d="M0 4h6" stroke="#fff" stroke-width="2"/></svg></button>
    <input type="range" min="0" max="100" value="50" aria-label="Zoom" class="appearance-none w-[95px] h-px bg-white [&::-webkit-slider-thumb]:appearance-none [&::-webkit-slider-thumb]:w-1 [&::-webkit-slider-thumb]:h-[11px] [&::-webkit-slider-thumb]:bg-white">
    <button class="ml-1 mr-3" aria-label="Zoom in"><svg class="w-2 h-2" viewBox="0 0 8 8"><path d="M0 4h8M4 0v8" stroke="#fff" stroke-width="2"/></svg></button>
    <span>100%</span>
  </footer>

  <!-- taskbar -->
  <div class="flex h-9 bg-[#1f1f20] text-white">
    <button class="w-11 flex items-center justify-center" aria-label="Start"><svg class="w-4 h-4" viewBox="0 0 16 16"><path d="M0 2.200l6.500-.9v6.200H0zM7.500 1.200L16 0v7.500H7.500zM0 8.500h6.500v6.200L0 13.800zM7.500 8.500H16V16l-8.500-1.200z" fill="#fff"/></svg></button>
    <button class="w-[46px] flex items-center justify-center" aria-label="Search"><svg class="w-4 h-4" viewBox="0 0 16 16"><circle cx="10" cy="6" r="5" fill="none" stroke="#fff" stroke-width="1.400"/><path d="M6.500 9.500L.5 15.500" stroke="#fff" stroke-width="1.600"/></svg></button>
    <button class="w-[46px] flex items-center justify-center pr-1" aria-label="Task view"><svg class="w-5 h-4" viewBox="0 0 20 16"><path d="M4.500 1.500h11v12h-11zM3 3.500H1v8h2M17 3.500h2v8h-2" fill="none" stroke="#fff" stroke-width="1.200"/></svg></button>
    <button class="w-[46px] flex items-center justify-center" aria-label="Edge"><svg class="w-5 h-5" viewBox="0 0 20 20"><path d="M1 9C2 3 6 0 10.500 0 16 0 19 4 19 9v2H7c0 4 6 6 11 3v4c-7 4-15 1-15-6 0-3 2-5 5-6-1 1-1.500 2-1.500 3H13c0-6-8-5-12 0z" fill="#1b78d6"/></svg></button>
    <button class="w-[46px] flex items-center justify-center relative" aria-label="File Explorer"><svg class="w-5 h-5" viewBox="0 0 20 20"><path d="M0 2h8l2 2h10v14H0z" fill="#e9bf55"/><path d="M0 6h20v12H0z" fill="#fbe08f"/><path d="M4 19v-7h12v7h-3v-3H7v3z" fill="#35a9e0"/></svg><span class="absolute bottom-0 w-[38px] h-px bg-[#83a9d0]"></span></button>
    <button class="w-[46px] flex items-center justify-center" aria-label="Store"><svg class="w-5 h-[22px]" viewBox="0 0 20 22"><path d="M5 6c0-6 8-6 9-1" fill="none" stroke="#fff" stroke-width="1.300"/><path d="M0 6l20-1v15l-4 2-16-2z" fill="#fff"/><path d="M4 9.500l4.500-.5v4H4zM9.500 9l5-.5V13h-5zM4 14h4.500v4L4 17.500zM9.500 14h5v4.500l-5-.5z" fill="#222"/></svg></button>
    <button class="w-[46px] flex items-center justify-center relative" aria-label="Chrome"><svg class="w-5 h-5" viewBox="0 0 20 20"><circle cx="10" cy="10" r="10" fill="#f5c629"/><path d="M10 10L1.340 5A10 10 0 0118.660 5z" fill="#dc4437"/><path d="M10 10L1.340 5A10 10 0 0010 20l4.500-8z" fill="#229b58"/><path d="M10 5h8.660A10 10 0 0010 0z" fill="#dc4437"/><circle cx="10" cy="10" r="4.800" fill="#fff"/><circle cx="10" cy="10" r="3.800" fill="#4285f4"/></svg><span class="absolute bottom-0 w-[38px] h-px bg-[#83a9d0]"></span></button>
    <button class="w-[46px] flex items-center justify-center relative" aria-label="Skype"><svg class="w-6 h-6" viewBox="0 0 24 24"><circle cx="6" cy="6" r="5.500" fill="#17a8e8"/><circle cx="10.500" cy="10.500" r="9.500" fill="#17a8e8"/><circle cx="17.500" cy="17.500" r="6.500" fill="#0f9ade"/><path d="M14 7c-2-3-8-2-7 1s7 1.500 7 4.500-6 3.500-7.500.5" fill="none" stroke="#fff" stroke-width="2"/><path d="M14.500 17a3 3 0 016-1M20.500 18a3 3 0 01-6 1" fill="none" stroke="#fff" stroke-width="1.200"/></svg><span class="absolute bottom-0 w-[38px] h-px bg-[#83a9d0]"></span></button>
    <button class="w-[46px] flex items-center justify-center relative" aria-label="Camtasia"><svg class="w-[23px] h-[23px]" viewBox="0 0 23 23"><rect width="23" height="23" rx="2" fill="#5aa81e"/><path d="M0 12h23v9a2 2 0 01-2 2H2a2 2 0 01-2-2z" fill="#4c9c14"/><path d="M19 6H9.500C6 6 5 7 5 11.500S6 17 9.500 17H19" fill="none" stroke="#fff" stroke-width="3.500"/></svg><span class="absolute bottom-0 w-[38px] h-px bg-[#83a9d0]"></span></button>
    <button class="w-[46px] flex items-center justify-center relative" aria-label="Camtasia Recorder"><svg class="w-[23px] h-[23px]" viewBox="0 0 23 23"><rect width="23" height="23" rx="2" fill="#f4533f"/><path d="M19 6H9.500C6 6 5 7 5 11.500S6 17 9.500 17H19" fill="none" stroke="#fff" stroke-width="3.500"/></svg><span class="absolute bottom-0 w-[38px] h-px bg-[#83a9d0]"></span></button>
    <button class="w-[46px] flex items-center justify-center relative bg-[#4a4a4b]" aria-label="Excel"><svg class="w-5 h-4" viewBox="0 0 20 16"><path d="M10 1.500h9v13h-9zM10 4.500h9M10 8h9M10 11.500h9M14.500 1v14" fill="none" stroke="#fff"/><path d="M0 1l11-1v16L0 15z" fill="#1e6b41"/><path d="M3 4.500l5 7M8 4.500l-5 7" stroke="#fff" stroke-width="1.800"/></svg><span class="absolute bottom-0 w-full h-px bg-[#83a9d0]"></span></button>

    <div class="ml-auto flex items-center gap-2 pr-[5px]">
      <button aria-label="Show hidden icons"><svg class="w-3 h-2" viewBox="0 0 12 8"><path d="M1 7l5-5 5 5" fill="none" stroke="#fff" stroke-width="1.500"/></svg></button>
      <svg class="w-4 h-3" viewBox="0 0 16 12"><path d="M5 3.500h9v6H4v-3M14.500 5v3" fill="none" stroke="#fff" stroke-width="1.500"/><path d="M1 0v2M4 0v2M0 2h5v3H0zM2 5v5h3" fill="#fff" stroke="#fff"/></svg>
      <svg class="w-3 h-3" viewBox="0 0 12 12"><path d="M1 12C1 6 6 1 12 1" fill="none" stroke="#777" stroke-width="1.300"/><path d="M4 12c0-4 4-8 8-8M7 12c0-3 2-5 5-5" fill="none" stroke="#fff" stroke-width="1.300"/><path d="M9 10h3v2H9z" fill="#fff"/></svg>
      <svg class="w-4 h-3" viewBox="0 0 16 12"><path d="M.7 4h3l3-3v10l-3-3h-3z" fill="none" stroke="#fff" stroke-width="1.200"/><path d="M9 4c1 1 1 3 0 4" fill="none" stroke="#fff"/><path d="M11 2c2 2 2 6 0 8M13 1c3 3 3 7 0 10" fill="none" stroke="#888"/></svg>
      <svg class="w-4 h-4" viewBox="0 0 16 16"><path d="M1 1h14v11h-4l-3 3v-3H1zM4 4.500h8M4 7h8M4 9.500h5" fill="none" stroke="#fff" stroke-width="1.300"/></svg>
      <span>ENG</span>
      <div class="text-center leading-4 pl-[2px]">4:46 PM<br>12/17/2016</div>
    </div>
  </div>

<script>
document.addEventListener('DOMContentLoaded', function() {
    const letters = 'ABCDEFGHIJKLMNOPQ'.split('');
    const people = [
        ['Arzu', 'Əliyeva', 'Q', '12', '1', '+', '-', '+'],
        ['Azər', 'Məmmədov', 'K', '6', '3', '+', '-', '+'],
        ['Cəmilə', 'Süleymanova', 'Q', '4', '4', '-', '-', '-'],
        ['Elşad', 'Qasımov', 'K', '2', '5', '-', '-', '-'],
        ['Emin', 'Cəfərov', 'K', '8', '7', '+', '+', '+'],
        ['Aişə', 'Rüstəmli', 'Q', '9', '8', '+', '+', '+'],
        ['Leyla', 'Firudinbəyli', 'Q', '3', '9', '-', '-', '+'],
        ['Türkan', 'Əliyeva', 'Q', '1', '4', '-', '-', '-'],
        ['Elşən', 'Süleymanova', 'K', '14', '2', '+', '-', '+'],
        ['Hacı', 'Əsgərov', 'K', '4', '6', '-', '-', '-'],
        ['Hüseyn', 'Məmmədli', 'K', '6', '9', '+', '+', '+']
    ];
    const titles = ['Ad', 'Soyad', 'Cinsi', 'Tecrübelərin Sayı', 'Sertikifatların Sayı'];

    // rows whose height rounds up to 20px, down to 18px; the rest are 19px
    const tall = [3, 4, 5, 7, 8, 9, 11, 12, 13];
    const low = [2, 19];

    const light = 'border-r border-b border-[#d4d4d4]';
    const dark = 'border-r border-b border-[#333]';

    let head = '<th class="h-5 border-r border-b border-[#bbb]"><svg class="w-[11px] h-[11px] ml-2" viewBox="0 0 11 11"><path d="M11 0v11H0z" fill="#d8d8d8"/></svg></th>';
    letters.forEach(function(letter) {
        if (letter === 'I') {
            head += '<th scope="col" class="h-5 p-0 border-r border-r-[#ccc] border-b-2 border-b-[#217346] bg-[#e1e1e1] text-[#217346] text-[12px] font-bold leading-none">I</th>';
        } else {
            head += '<th scope="col" class="h-5 p-0 border-r border-r-[#ccc] border-b border-b-[#bbb] text-[#666] text-[12px] font-normal leading-none">' + letter + '</th>';
        }
    });
    document.querySelector('#letters').innerHTML = head;

    let html = '';
    for (let row = 1; row <= 23; row++) {
        const selected = row >= 4 && row <= 14;
        const height = tall.includes(row) ? 'h-5' : low.includes(row) ? 'h-[18px]' : 'h-[19px]';
        html += '<tr class="' + height + ' leading-4">';
        html += selected
            ? '<th scope="row" class="p-0 border-r-2 border-r-[#217346] border-b border-b-[#ccc] bg-[#e1e1e1] text-[#217346] text-[12px] font-bold font-[\'Open_Sans\',sans-serif]">' + row + '</th>'
            : '<th scope="row" class="p-0 border-r border-r-[#bbb] border-b border-b-[#d4d4d4] text-[#666] text-[12px] font-normal font-[\'Open_Sans\',sans-serif]">' + row + '</th>';

        for (let col = 0; col < letters.length; col++) {
            if (row === 3 && col >= 1 && col <= 5) {
                html += '<td class="p-0 text-center whitespace-nowrap ' + dark + '">' + titles[col - 1] + '</td>';
            } else if (row === 3 && col === 6) {
                html += '<td colspan="3" class="p-0 text-center ' + dark + '">Çalışqan İşçi</td>';
                col = 8;
            } else if (selected && col >= 1 && col <= 8) {
                const value = people[row - 4][col - 1];
                const align = col >= 6 ? 'pl-[2px] text-left' : 'text-center';
                const fill = col === 8 && row > 4 ? 'bg-[#c3c3c3]' : '';
                html += '<td class="p-0 ' + align + ' ' + fill + ' ' + dark + '">' + value + '</td>';
            } else if (row === 2 && col >= 1 && col <= 8) {
                html += '<td class="p-0 border-r border-r-[#d4d4d4] border-b border-b-[#333]"></td>';
            } else if (selected && col === 0 || row === 3 && col === 0) {
                html += '<td class="p-0 border-r border-r-[#333] border-b border-b-[#d4d4d4]"></td>';
            } else {
                html += '<td class="p-0 ' + light + '"></td>';
            }
        }
        html += '</tr>';
    }
    document.querySelector('#cells').innerHTML = html;
});
</script>

</body>
</html>
